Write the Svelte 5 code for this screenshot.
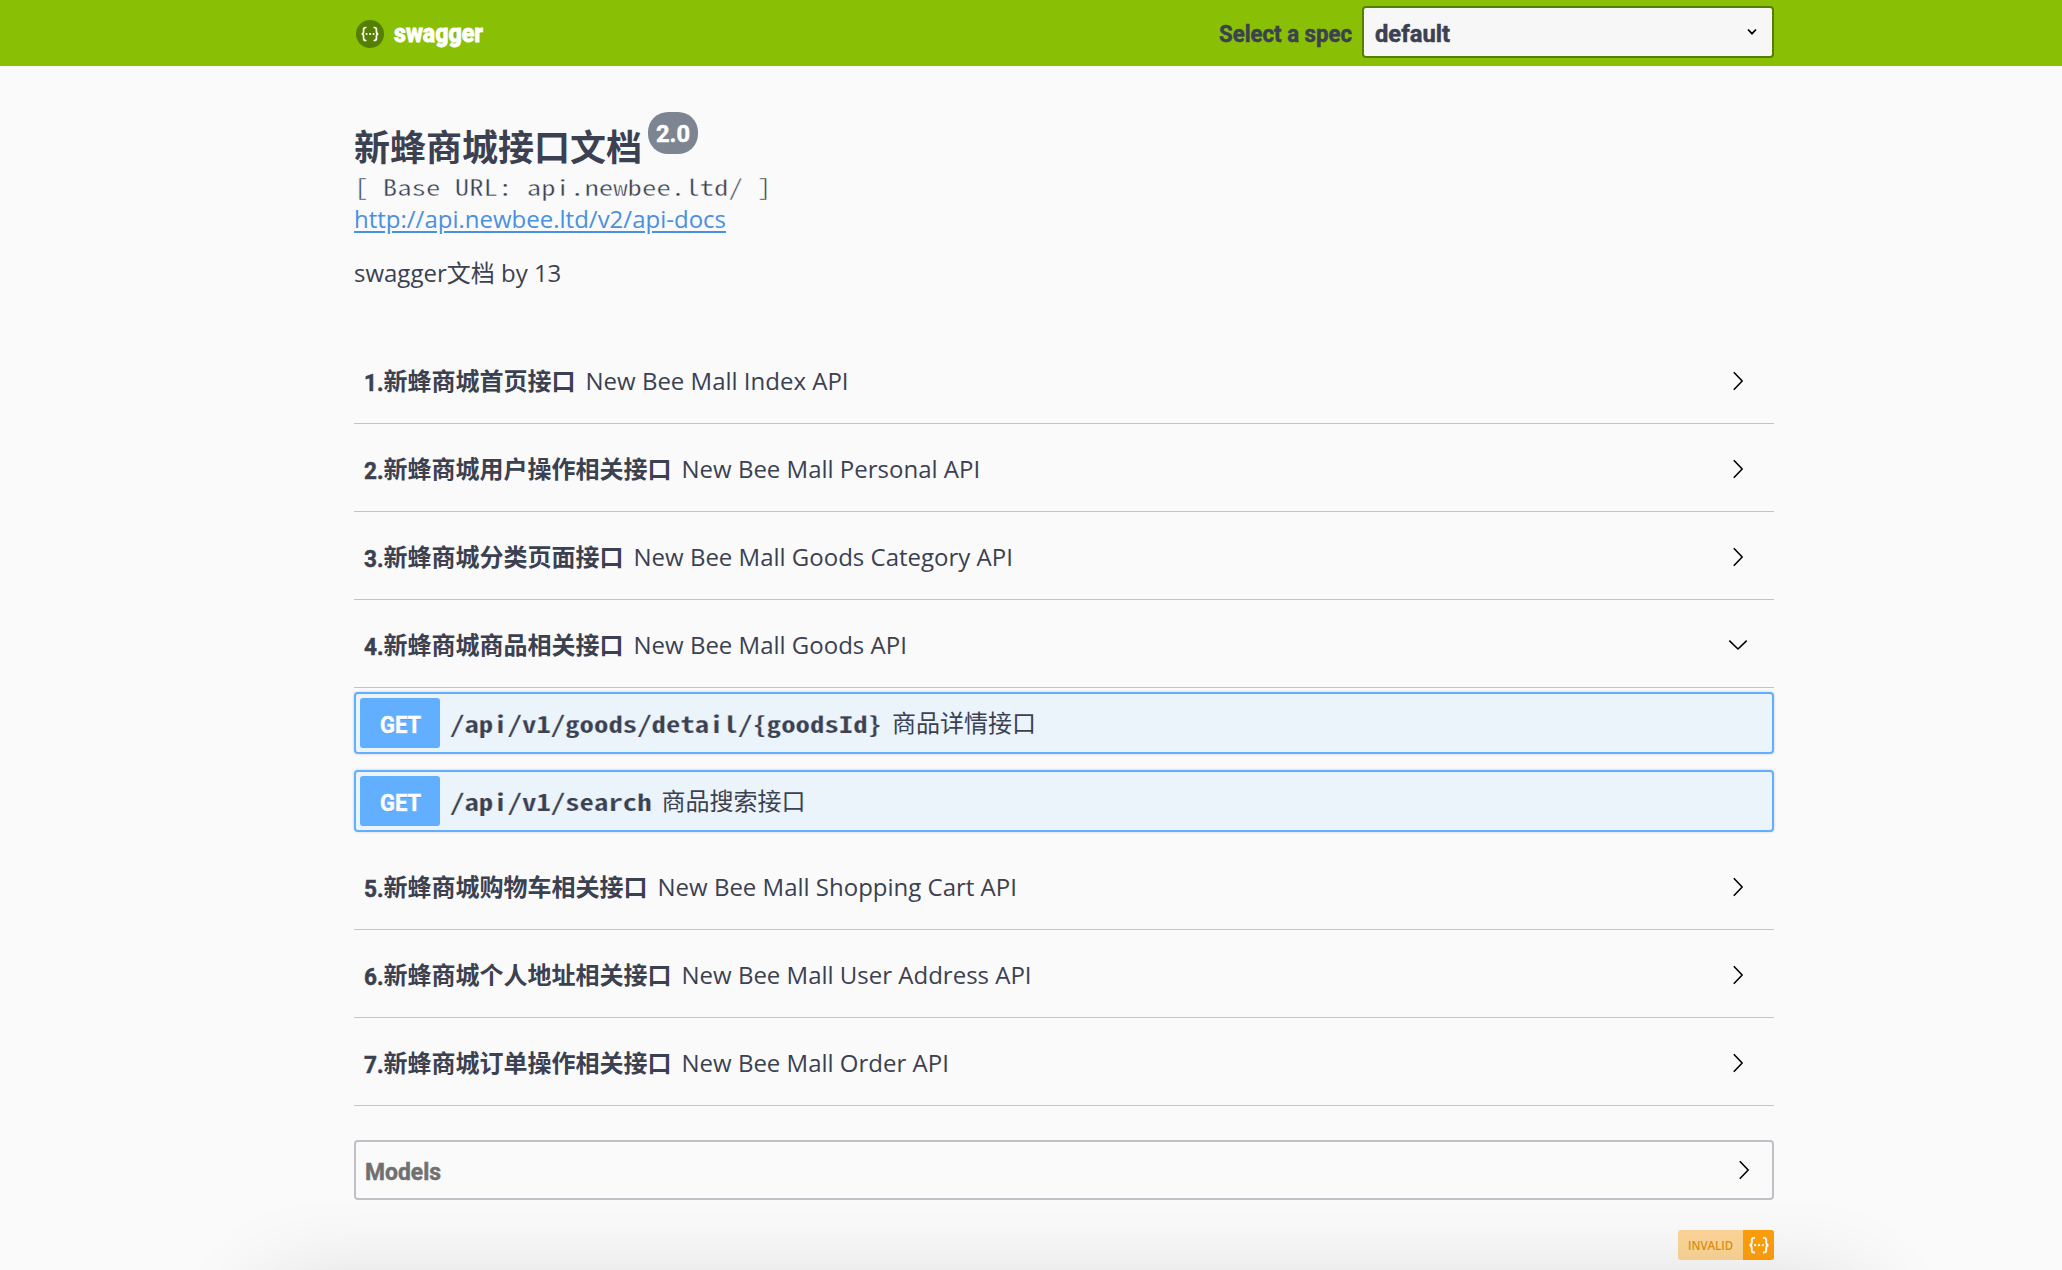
<script>
  const before = [
    { n: '1', name: '新蜂商城首页接口', desc: 'New Bee Mall Index API' },
    { n: '2', name: '新蜂商城用户操作相关接口', desc: 'New Bee Mall Personal API' },
    { n: '3', name: '新蜂商城分类页面接口', desc: 'New Bee Mall Goods Category API' },
    { n: '4', name: '新蜂商城商品相关接口', desc: 'New Bee Mall Goods API', open: true },
  ];
  const after = [
    { n: '5', name: '新蜂商城购物车相关接口', desc: 'New Bee Mall Shopping Cart API' },
    { n: '6', name: '新蜂商城个人地址相关接口', desc: 'New Bee Mall User Address API' },
    { n: '7', name: '新蜂商城订单操作相关接口', desc: 'New Bee Mall Order API' },
  ];
  const operations = [
    { path: '/api/v1/goods/detail/{goodsId}', summary: '商品详情接口' },
    { path: '/api/v1/search', summary: '商品搜索接口' },
  ];
  const monoAdvance = 14.4;
</script>

<!-- Display label whose glyphs are fitted to a fixed width -->
{#snippet label(text, width, cls)}
  <svg class="label {cls}" {width} height="34" viewBox="0 0 {width} 34">
    <text x="0" y="26" textLength={width} lengthAdjust="spacingAndGlyphs">{text}</text>
  </svg>
{/snippet}

{#snippet arrow(open)}
  <svg class="arrow" width="20" height="20" viewBox="0 0 20 20">
    {#if open}
      <path d="M1.3 5.6 10 14l8.7-8.4" />
    {:else}
      <path d="M5.8 1.3 14.2 10l-8.4 8.7" />
    {/if}
  </svg>
{/snippet}

{#snippet braces()}
  <path d="M8.5 4.5H7.6Q5.6 4.5 5.6 6.5V8.4Q5.6 10.7 3.7 11Q5.6 11.3 5.6 13.6V15.5Q5.6 17.5 7.6 17.5H8.5" />
  <path d="M15.5 4.5H16.4Q18.4 4.5 18.4 6.5V8.4Q18.4 10.7 20.3 11Q18.4 11.3 18.4 13.6V15.5Q18.4 17.5 16.4 17.5H15.5" />
  <path class="dots" d="M8.5 11h.1M12 11h.1M15.5 11h.1" />
{/snippet}

{#snippet section(tag)}
  <div class="tag">
    {@render label(tag.n + '.', 19.5, 'dark low')}
    <span class="name">{tag.name}</span>
    <span class="desc">{tag.desc}</span>
    {@render arrow(tag.open)}
  </div>
{/snippet}

<div class="page">
  <header>
    <div class="wrap bar">
      <div class="logo">
        <svg width="28" height="28" viewBox="0 0 28 28">
          <circle cx="14" cy="14" r="14" />
          <g transform="translate(2 3)">{@render braces()}</g>
        </svg>
        {@render label('swagger', 89, 'white brand')}
      </div>
      <div class="spec">
        {@render label('Select a spec', 133, 'dark')}
        <div class="select">
          {@render label('default', 75, 'dark')}
          <svg class="chev" width="12" height="8" viewBox="0 0 12 8"><path d="M2 1.5 6 5.7l4-4.2" /></svg>
        </div>
      </div>
    </div>
  </header>

  <main class="wrap">
    <section class="info">
      <div class="title">
        <h1>新蜂商城接口文档</h1>
        <span class="version">{@render label('2.0', 34, 'white')}</span>
      </div>
      <div class="base">{@render label('[ Base URL: api.newbee.ltd/ ]', 29 * monoAdvance, 'light')}</div>
      <a href="http://api.newbee.ltd/v2/api-docs">http://api.newbee.ltd/v2/api-docs</a>
      <p>swagger文档 by 13</p>
    </section>

    {#each before as tag}{@render section(tag)}{/each}
    <div class="ops">
      {#each operations as op}
        <div class="op">
          <span class="method">{@render label('GET', 41, 'white low')}</span>
          <code>{@render label(op.path, op.path.length * monoAdvance, 'mono low')}</code>
          <span class="summary">{op.summary}</span>
        </div>
      {/each}
    </div>
    {#each after as tag}{@render section(tag)}{/each}

    <div class="models">
      {@render label('Models', 76, 'gray low')}
      {@render arrow(false)}
    </div>

    <div class="badge">
      <span class="invalid">{@render label('INVALID', 45, 'tiny')}</span>
      <span class="mark">
        <svg width="26" height="24" viewBox="0.5 0.2 23 21.2">{@render braces()}</svg>
      </span>
    </div>
  </main>
  <div class="shade"></div>
</div>

<style>
  :global(body) { background: #fafafa; overflow: hidden; }
  .page {
    position: relative;
    height: 1270px;
    overflow: hidden;
    background: #fafafa;
    color: #3b4151;
    font-family: 'Open Sans', 'Noto Sans CJK SC', sans-serif;
    font-size: 24px;
  }
  .page * { box-sizing: border-box; }
  .wrap { width: 1420px; margin-left: 354px; }
  svg { display: block; flex: none; }
  header { height: 66px; background: #89bf04; }
  .bar { display: flex; height: 66px; justify-content: space-between; }
  .logo { display: flex; align-items: center; gap: 10px; padding: 2px 0 0 2px; }
  .logo circle { fill: #547f00; stroke: none; }
  .label { overflow: visible; }
  .label text { font: 700 24px Roboto, 'Open Sans', sans-serif; stroke-width: 0.5; }
  .low { margin-top: 2px; }
  .white text { fill: #fff; stroke: #fff; }
  .dark text { fill: #3b4151; stroke: #3b4151; }
  .gray text { fill: #707070; stroke: #707070; }
  .brand { margin-top: -2px; }
  .brand text { font-size: 26px; font-weight: 800; stroke-width: 0.9; }
  .mono text {
    font: 700 22.5px 'Noto Sans Mono CJK SC', 'Liberation Mono', monospace;
    fill: #3b4151;
    stroke: #ebf3fb;
    stroke-width: 0.25;
  }
  .light text {
    font: 400 22.5px 'Noto Sans Mono CJK SC', 'Liberation Mono', monospace;
    fill: #3b4151;
    stroke: #fafafa;
    stroke-width: 0.4;
  }
  .tiny text { font: 600 13px 'Open Sans', sans-serif; fill: #dd9310; }
  .spec { display: flex; align-items: center; gap: 10px; padding-bottom: 2px; }
  .spec > .label { margin-top: 2px; }
  .select {
    display: flex;
    align-items: center;
    justify-content: space-between;
    width: 412px;
    height: 52px;
    padding: 2px 14px 0 11px;
    border: 2px solid #547f00;
    border-radius: 4px;
    background: #f7f7f7;
  }
  .chev { margin-top: -3px; }
  .chev path { fill: none; stroke: #000; stroke-width: 1.7; }

  .info { height: 270px; padding-top: 46px; }
  .title { display: flex; gap: 6px; height: 58px; }
  h1 {
    margin: 9px 0 0;
    font: 700 36px/48px 'Noto Sans CJK SC', sans-serif;
  }
  .version {
    display: flex;
    align-items: center;
    justify-content: center;
    width: 50px;
    height: 42px;
    border-radius: 20px;
    background: #7d8492;
  }
  .base { height: 33px; }
  a { display: block; color: #4990e2; line-height: 32px; text-underline-offset: 3px; }
  p { margin: 20px 0 0; line-height: 36px; }

  .tag {
    display: flex;
    align-items: center;
    height: 88px;
    padding: 2px 26px 0 10px;
    border-bottom: 1px solid #c4c5c9;
    line-height: 34px;
  }
  .name { margin-top: -2px; font: 700 24px/34px 'Noto Sans CJK SC', sans-serif; }
  .desc { padding-left: 10px; }
  .arrow { margin-left: auto; }
  .arrow path { fill: none; stroke: #000; stroke-width: 1.6; stroke-linejoin: round; }

  .ops { display: flex; flex-direction: column; gap: 16px; padding: 4px 0 10px; }
  .op {
    display: flex;
    align-items: center;
    height: 62px;
    padding-left: 4px;
    border: 2px solid #61affe;
    border-radius: 4px;
    background: #ebf3fb;
    box-shadow: 0 0 3px rgba(0, 0, 0, 0.19);
  }
  .method {
    display: flex;
    align-items: center;
    justify-content: center;
    width: 80px;
    height: 50px;
    border-radius: 3px;
    background: #61affe;
  }
  .method text { text-shadow: 0 1px 0 rgba(0, 0, 0, 0.1); }
  code { padding: 0 10px; }
  .summary { line-height: 34px; }

  .models {
    display: flex;
    align-items: center;
    height: 60px;
    margin-top: 34px;
    padding: 0 18px 0 9px;
    border: 2px solid #c0c1c7;
    border-radius: 4px;
  }
  .badge {
    display: flex;
    width: 96px;
    height: 30px;
    margin: 30px 0 0 auto;
    border-radius: 3px;
    overflow: hidden;
    background: #fdd597;
  }
  .invalid { width: 65px; padding-left: 10px; }
  .tiny { margin-top: -6px; }
  .mark {
    display: flex;
    flex: 1;
    align-items: center;
    justify-content: center;
    background: #ff9f0d;
  }
  .logo path, .mark path { fill: none; stroke: #fff; stroke-width: 1.7; }
  .logo .dots, .mark .dots { stroke-width: 2; stroke-linecap: round; }
  .shade {
    position: absolute;
    top: 1290px;
    left: 268px;
    width: 1592px;
    height: 200px;
    box-shadow: 0 0 95px rgba(0, 0, 0, 0.16);
    pointer-events: none;
  }
</style>
